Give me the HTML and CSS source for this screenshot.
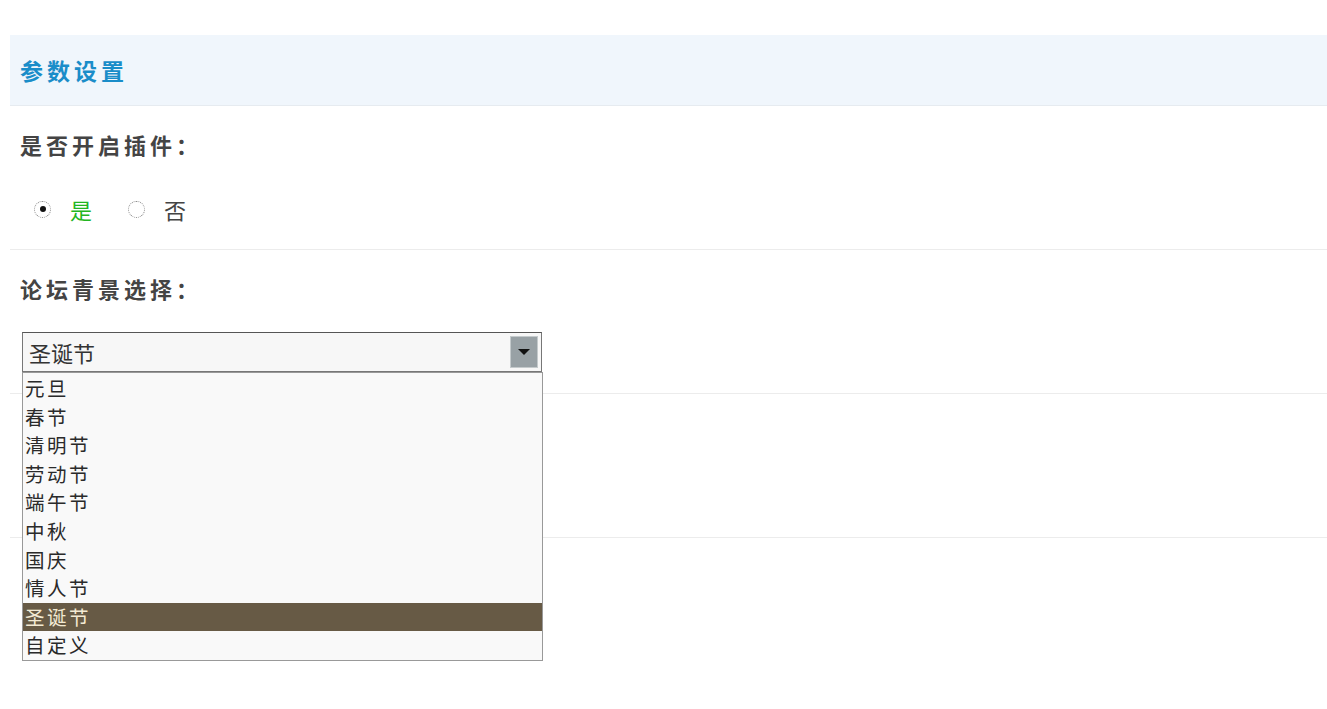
FILE: index.html
```html
<!DOCTYPE html>
<html lang="zh-CN">
<head>
    <meta charset="UTF-8">
    <title>参数设置</title>
    <link rel="stylesheet" href="styles.css">
</head>
<body>
    <div class="panel">
        <div class="panel-head">参数设置</div>

        <div class="row">
            <div class="row-title">是否开启插件：</div>
            <div class="radios">
                <label class="radio">
                    <span class="radio-box checked"></span>
                    <span class="radio-text on">是</span>
                </label>
                <label class="radio">
                    <span class="radio-box"></span>
                    <span class="radio-text">否</span>
                </label>
            </div>
        </div>

        <div class="row">
            <div class="row-title">论坛青景选择：</div>
            <div class="select-wrap">
                <div class="select">
                    <span class="select-value">圣诞节</span>
                    <span class="select-btn"><span class="arrow"></span></span>
                </div>
                <ul class="select-list">
                    <li>元旦</li>
                    <li>春节</li>
                    <li>清明节</li>
                    <li>劳动节</li>
                    <li>端午节</li>
                    <li>中秋</li>
                    <li>国庆</li>
                    <li>情人节</li>
                    <li class="selected">圣诞节</li>
                    <li>自定义</li>
                </ul>
            </div>
        </div>

        <div class="row empty"></div>
    </div>
</body>
</html>
```

FILE: styles.css
```css
html, body {
    min-height: 100%;
}
body {
    margin: 0;
    padding: 35px 0 0 10px;
    min-height: 709px;
    box-sizing: border-box;
    background: #fff;
    font-family: "Noto Sans CJK SC", "Liberation Sans", sans-serif;
    color: #333;
}
.panel {
    display: flex;
    flex-direction: column;
}
.panel-head {
    height: 70px;
    line-height: 70px;
    padding-left: 10px;
    background: #f0f6fc;
    border-bottom: 1px solid #e6ebf0;
    color: #1a8dc9;
    font-size: 23px;
    font-weight: bold;
    letter-spacing: 4px;
}
.row {
    height: 143px;
    padding: 0 10px;
    border-bottom: 1px solid #ececec;
}
.row-title {
    margin-top: 25px;
    line-height: 26px;
    font-size: 22px;
    font-weight: bold;
    color: #444;
    letter-spacing: 4px;
}
.radios {
    display: flex;
    align-items: center;
    gap: 36px;
    margin-top: 38px;
    padding-left: 14px;
}
.radio {
    display: flex;
    align-items: center;
    gap: 19px;
}
.radio-box {
    width: 15px;
    height: 15px;
    border: 1px dotted #888;
    border-radius: 50%;
    background: #fff;
    display: flex;
    align-items: center;
    justify-content: center;
}
.radio-box.checked::after {
    content: "";
    width: 6px;
    height: 6px;
    border-radius: 50%;
    background: #111;
}
.radio-text {
    font-size: 22px;
    line-height: 28px;
    color: #444;
}
.radio-text.on {
    color: #22b522;
}
.select-wrap {
    position: relative;
    margin-top: 31px;
    margin-left: 2px;
    width: 520px;
}
.select {
    height: 38px;
    border: 1px solid #777;
    border-top-color: #555;
    background: #f7f7f7;
    display: flex;
    align-items: center;
    justify-content: space-between;
    padding: 0 3px 0 6px;
}
.select-value {
    font-size: 22px;
    color: #333;
}
.select-btn {
    width: 26px;
    height: 30px;
    background: #98a1a5;
    border: 1px solid #c4cacc;
    display: flex;
    align-items: center;
    justify-content: center;
}
.arrow {
    width: 0;
    height: 0;
    border-left: 6px solid transparent;
    border-right: 6px solid transparent;
    border-top: 6px solid #111;
}
.select-list {
    position: absolute;
    top: 40px;
    left: 0;
    width: 519px;
    margin: 0;
    padding: 1px 0 0;
    list-style: none;
    background: #f9f9f9;
    border: 1px solid #999;
    z-index: 5;
}
.select-list li {
    height: 28.6px;
    line-height: 28.6px;
    padding-left: 2px;
    font-size: 19.5px;
    letter-spacing: 2.5px;
    color: #2a2a2a;
}
.select-list li.selected {
    background: #675a45;
    color: #f3ead3;
}
```
